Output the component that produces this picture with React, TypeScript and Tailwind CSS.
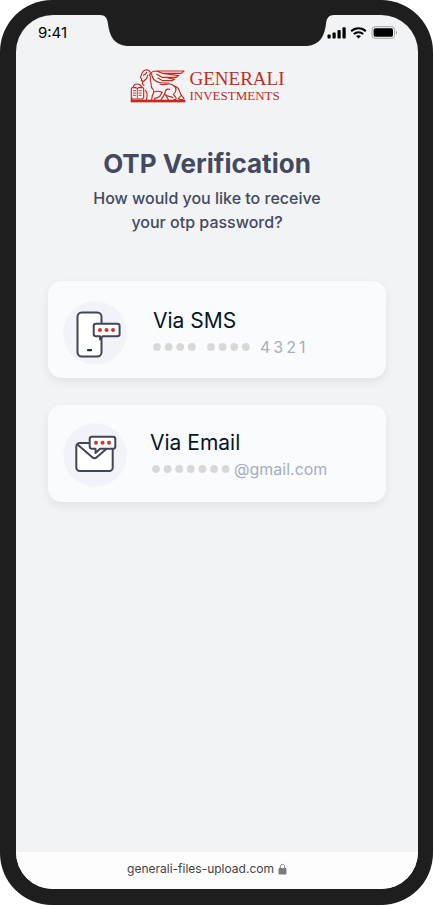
import React from 'react';

const RED = '#c8281f';
const INK = '#424557';

function Notch() {
  return (
    <svg
      className="absolute left-1/2 -top-px -translate-x-1/2"
      width="234"
      height="32"
      viewBox="0 0 234 32"
      aria-hidden="true"
    >
      <path
        d="M0 0V1C5 1 7.500 4 8 10C9.500 22 14 31 27 32H207C220 31 224.500 22 226 10C226.500 4 229 1 234 1V0Z"
        fill="#1e1e1e"
      />
    </svg>
  );
}

function StatusBar() {
  return (
    <div className="flex h-[35px] items-center justify-between pl-[22px] pr-5">
      <span className="text-[15px] leading-5 text-black">9:41</span>
      <div className="flex items-center gap-1">
        <svg width="19" height="12" viewBox="0 0 19 12" fill="#000" aria-hidden="true">
          <rect x="0.500" y="7.500" width="3.200" height="4" rx="0.900" />
          <rect x="5.500" y="5.500" width="3.200" height="6" rx="0.900" />
          <rect x="10.500" y="3" width="3.200" height="8.500" rx="0.900" />
          <rect x="15.500" y="0.300" width="3.200" height="11.200" rx="0.900" />
        </svg>
        <svg width="17" height="12" viewBox="0 0 17 12" fill="none" stroke="#000" aria-hidden="true">
          <path d="M1.200 4.200C5.300 0.300 11.700 0.300 15.800 4.200" strokeWidth="2" />
          <path d="M3.800 7C6.500 4.500 10.500 4.500 13.200 7" strokeWidth="2" />
          <path d="M8.500 11.500L6 9.100C7.400 7.800 9.600 7.800 11 9.100Z" fill="#000" stroke="none" />
        </svg>
        <svg width="27" height="13" viewBox="0 0 27 13" aria-hidden="true">
          <rect x="1" y="0.700" width="22.600" height="11.600" rx="3" fill="none" stroke="#a3a4a6" />
          <rect x="2.600" y="2.300" width="19.400" height="8.400" rx="1.600" fill="#000" />
          <path d="M25 4.500C26.400 5.200 26.400 7.800 25 8.500Z" fill="#a3a4a6" />
        </svg>
      </div>
    </div>
  );
}

function Lion() {
  return (
    <svg
      width="56"
      height="34"
      viewBox="26 26 168 102"
      fill="none"
      stroke={RED}
      strokeWidth="3.400"
      strokeLinejoin="round"
      strokeLinecap="round"
      aria-hidden="true"
    >
      <rect x="28" y="118" width="164" height="8" fill={RED} stroke="none" />
      {/* book */}
      <path d="M30 118V86Q30 82 34 82H44L48 85L52 82H63Q67 82 67 86V112L63 116H34L30 112" />
      <path d="M48 86V114M36 91H43M36 98H43M36 105H43M53 91H60M53 98H60M53 105H60" strokeWidth="2.600" />
      <path d="M36 80C37 73 42 71 48 71C54 71 58 74 61 80" />
      {/* head and mane */}
      <path d="M62 39C65 30 74 27 81 30C88 33 88 39 85 44M62 39L57 52L61 55L60 61L67 63L72 58" />
      <path d="M66 45L72 42L76 36M72 58C78 54 77 48 80 44M67 63C61 67 63 73 68 75" />
      <path d="M85 44C91 51 84 57 88 64C91 70 88 75 91 82" />
      {/* wing */}
      <path d="M89 40C91 34 97 32 104 32H188L180 39H124L104 32" />
      <path d="M124 39L172 46L165 51H122L106 42M134 51L160 57L152 61H124L110 53" />
      <path d="M89 40C93 43 92 51 98 58C103 64 116 68 128 68H142" />
      {/* body and tail */}
      <path d="M116 72C128 76 140 67 153 73C168 81 166 94 156 102L164 112C166 116 163 118 158 118" />
      <path d="M160 78C176 79 173 99 182 107L188 115C183 119 176 118 171 115L178 107" />
      {/* legs */}
      <path d="M72 90C79 97 78 108 75 118M91 82C98 88 98 98 93 105L91 118M98 95C106 92 114 92 122 96" />
      <path d="M122 96C118 101 118 110 110 111C103 112 99 114 99 118M119 118C124 111 131 103 132 94C133 87 138 85 145 87M132 103C139 108 147 109 154 111M133 104L141 118" />
    </svg>
  );
}

function Logo() {
  return (
    <div className="flex items-center gap-1 text-[#c8281f]">
      <Lion />
      <div className="flex flex-col items-start pt-px font-['Liberation_Serif',serif]">
        <span className="text-[19px] leading-5">GENERALI</span>
        <span className="text-[13px] leading-[14px]">INVESTMENTS</span>
      </div>
    </div>
  );
}

function SmsIcon() {
  return (
    <svg width="64" height="64" viewBox="0 0 64 64" aria-hidden="true">
      <circle cx="32" cy="32" r="31.700" fill="#f2f3f8" />
      <rect x="14.500" y="11.500" width="24" height="44" rx="4.200" fill="#fff" stroke={INK} strokeWidth="2" />
      <rect x="24" y="48" width="5" height="2.300" rx="0.700" fill="#1b2d6b" />
      <path
        d="M33 22.700H54.300Q56.600 22.700 56.600 25V33Q56.600 35.300 54.300 35.300H39.500L37 38.500V35.300H33Q30.700 35.300 30.700 33V25Q30.700 22.700 33 22.700Z"
        fill="#fff"
        stroke={INK}
        strokeWidth="2"
        strokeLinejoin="round"
      />
      <g fill="#d8322b">
        <circle cx="37" cy="29" r="2" />
        <circle cx="43.500" cy="29" r="2" />
        <circle cx="50" cy="29" r="2" />
      </g>
    </svg>
  );
}

function EmailIcon() {
  return (
    <svg width="64" height="64" viewBox="0 0 64 64" aria-hidden="true">
      <circle cx="32" cy="32" r="31.700" fill="#f2f3f8" />
      <rect x="13.300" y="20" width="36.400" height="28" rx="3.500" fill="#fff" stroke={INK} strokeWidth="2" />
      <path d="M14.500 21.500L29 34Q31.500 36.500 34 34L48.500 21.500" fill="none" stroke={INK} strokeWidth="2" />
      <path
        d="M29 13.700H50Q52.300 13.700 52.300 16V23.500Q52.300 25.800 50 25.800H37L32.500 30V25.800H29Q26.700 25.800 26.700 23.500V16Q26.700 13.700 29 13.700Z"
        fill="#fff"
        stroke={INK}
        strokeWidth="2"
        strokeLinejoin="round"
      />
      <g fill="#d8322b">
        <circle cx="33" cy="19.700" r="2" />
        <circle cx="39.500" cy="19.700" r="2" />
        <circle cx="46" cy="19.700" r="2" />
      </g>
    </svg>
  );
}

function Dots({ count }: { count: number }) {
  const width = Math.round(count * 11.6 - 3.4);
  return (
    <svg width={width} height="8" viewBox={`0 0 ${width} 8`} fill="#d8d8d8" aria-hidden="true">
      {Array.from({ length: count }, (_, i) => (
        <circle key={i} cx={4 + i * 11.6} cy="4" r="3.900" />
      ))}
    </svg>
  );
}

const cardClass =
  'flex h-[97px] w-full items-center rounded-[14px] bg-[#fafbfd] px-[15px] text-left shadow-[0_4px_10px_rgba(0,0,0,0.07)]';

export default function App() {
  return (
    <div className="min-h-screen bg-white pr-px pb-px font-['Inter',sans-serif]">
      <div className="flex min-h-[calc(100vh-1px)] flex-col rounded-[52px] bg-[#1e1e1e] px-[15px] pt-[15px] pb-4 pl-4">
        <div className="relative flex flex-1 flex-col rounded-[37px] bg-[#f2f3f5]">
          <Notch />
          <StatusBar />

          <main className="flex flex-1 flex-col px-8 pt-[18px]">
            <header className="flex flex-col items-center pr-5">
              <Logo />
              <h1 className="mt-[43px] text-[26px] leading-9 font-bold text-[#424961]">OTP Verification</h1>
              <p className="mt-1 max-w-60 text-center text-base leading-6 font-medium text-[#424961]">
                How would you like to receive your otp password?
              </p>
            </header>

            <div className="mt-[47px] flex w-full flex-col gap-[27px]">
              <button type="button" className={`${cardClass} gap-[26px] pt-1.5`}>
                <SmsIcon />
                <span className="flex flex-col">
                  <span className="text-[21px] leading-7 text-[#07152b]">Via SMS</span>
                  <span className="flex items-center text-base leading-6 text-[#a5adbd]">
                    <Dots count={4} />
                    <span className="ml-[11px] flex">
                      <Dots count={4} />
                    </span>
                    <span className="ml-2.5 flex gap-[3px]">
                      {['4', '3', '2', '1'].map((digit) => (
                        <span key={digit}>{digit}</span>
                      ))}
                    </span>
                  </span>
                </span>
              </button>

              <button type="button" className={`${cardClass} gap-[23px] pt-0.5`}>
                <EmailIcon />
                <span className="flex flex-col">
                  <span className="text-[21px] leading-7 text-[#07152b]">Via Email</span>
                  <span className="ml-0.5 flex items-center gap-1 text-base leading-6 text-[#a5adbd]">
                    <Dots count={7} />
                    <span>@gmail.com</span>
                  </span>
                </span>
              </button>
            </div>
          </main>

          <footer className="flex h-[37px] items-center justify-center gap-1 rounded-b-[37px] bg-[#fdfdfd] pr-5 pb-1 text-xs leading-4 text-[#434343]">
            <span>generali-files-upload.com</span>
            <svg width="9" height="12" viewBox="0 0 9 12" aria-hidden="true">
              <rect x="0.500" y="5" width="8" height="6.500" rx="1" fill="#7c7c7c" />
              <path d="M2.300 5.500V3.500C2.300 0.600 6.700 0.600 6.700 3.500V5.500" fill="none" stroke="#7c7c7c" />
            </svg>
          </footer>
        </div>
      </div>
    </div>
  );
}
